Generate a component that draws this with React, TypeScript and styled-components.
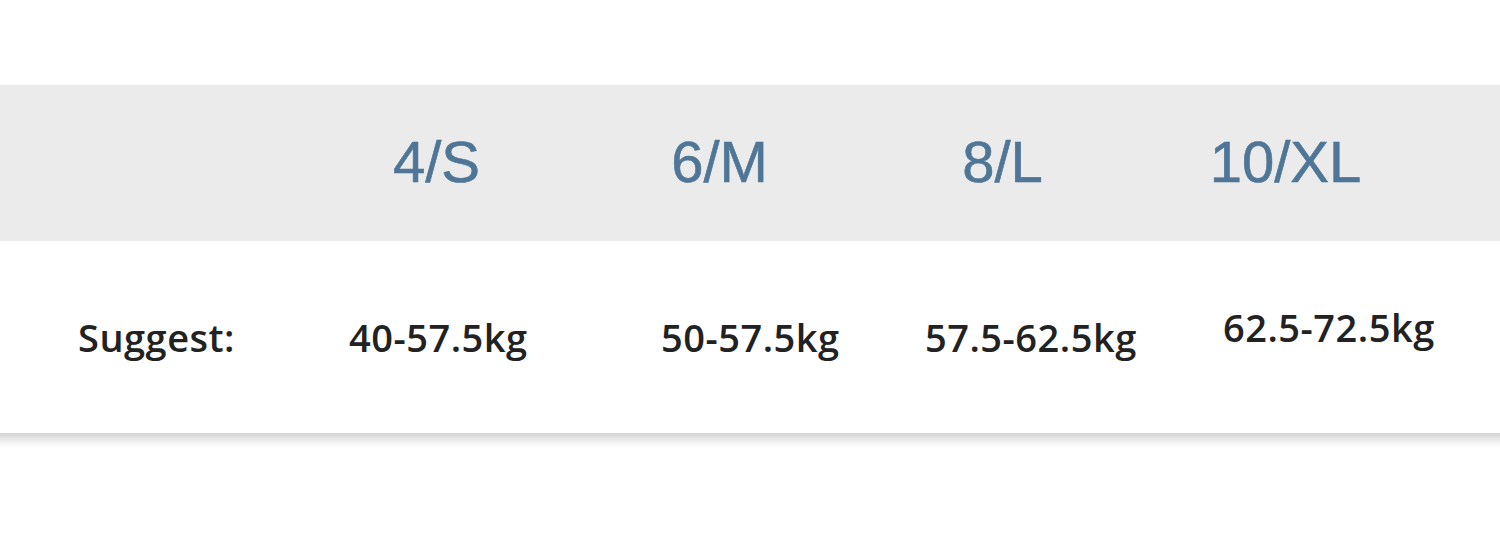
import styled, { createGlobalStyle } from 'styled-components';

const SIZES = ['4/S', '6/M', '8/L', '10/XL'];

const WEIGHTS = [
  { text: '40-57.5kg', raise: 0 },
  { text: '50-57.5kg', raise: 0 },
  { text: '57.5-62.5kg', raise: 0 },
  { text: '62.5-72.5kg', raise: 10 },
];

function App() {
  return (
    <>
      <GlobalStyle />
      <Page>
        <Chart>
          <HeaderRow>
            {SIZES.map((size) => (
              <SizeCell key={size}>{size}</SizeCell>
            ))}
          </HeaderRow>
          <BodyRow>
            <RowLabel>Suggest:</RowLabel>
            {WEIGHTS.map((item) => (
              <WeightCell key={item.text} $raise={item.raise}>
                {item.text}
              </WeightCell>
            ))}
          </BodyRow>
          <Shadow />
        </Chart>
      </Page>
    </>
  );
}

const GlobalStyle = createGlobalStyle`
  html,
  body {
    margin: 0;
    padding: 0;
    background: #ffffff;
  }
`;

const Page = styled.div`
  width: 1500px;
  height: 538px;
  padding-top: 85px;
  box-sizing: border-box;
  background: #ffffff;
  overflow: hidden;
`;

const Chart = styled.div`
  display: flex;
  flex-direction: column;
`;

const HeaderRow = styled.div`
  display: grid;
  grid-template-columns: repeat(4, 283px);
  align-items: center;
  height: 156px;
  padding-left: 295px;
  background: #ebebeb;
`;

const SizeCell = styled.div`
  font-family: 'Liberation Sans', Arial, sans-serif;
  font-size: 58px;
  color: #4f7696;
  text-align: center;
  margin-bottom: 4px;
  -webkit-text-stroke: 0.6px #4f7696;
`;

const BodyRow = styled.div`
  display: grid;
  grid-template-columns: 271px 312px 264px 298px auto;
  align-items: center;
  height: 192px;
  padding-left: 78px;
  background: #ffffff;
`;

const RowLabel = styled.div`
  font-family: 'Open Sans', 'Noto Sans', sans-serif;
  font-size: 38px;
  font-weight: 600;
  letter-spacing: 0.5px;
  color: #222222;
`;

const WeightCell = styled.div<{ $raise: number }>`
  font-family: 'Open Sans', 'Noto Sans', sans-serif;
  font-size: 38px;
  font-weight: 600;
  letter-spacing: 0.5px;
  color: #222222;
  margin-bottom: ${({ $raise }) => $raise * 2}px;
`;

const Shadow = styled.div`
  height: 14px;
  background: linear-gradient(to bottom, #d4d4d4 0%, #e6e6e6 40%, #ffffff 100%);
`;

export default App;
